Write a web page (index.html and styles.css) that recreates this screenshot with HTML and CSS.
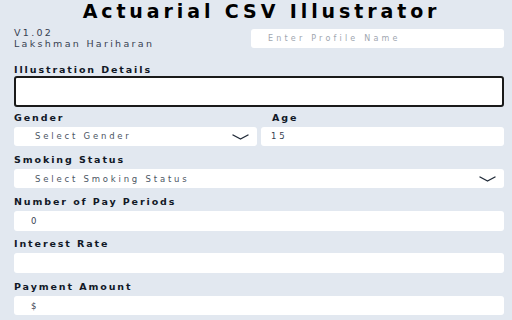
FILE: index.html
```html
<!DOCTYPE html>
<html lang="en">
<head>
<meta charset="utf-8">
<title>Actuarial CSV Illustrator</title>
<link rel="stylesheet" href="styles.css">
</head>
<body>
<div class="page">
  <h1 class="title">Actuarial CSV Illustrator</h1>
  <div class="header">
    <div class="meta">
      <div>V1.02</div>
      <div>Lakshman Hariharan</div>
    </div>
    <input class="control profile" type="text" placeholder="Enter Profile Name">
  </div>

  <div class="field details">
    <label class="label">Illustration Details</label>
    <textarea class="area"></textarea>
  </div>

  <div class="row2">
    <div class="field">
      <label class="label">Gender</label>
      <div class="select">
        <span class="select-text">Select Gender</span>
        <svg class="chev" viewBox="0 0 17 6" width="17" height="6"><path d="M1 1 L8.5 5 L16 1" fill="none" stroke="#1f2937" stroke-width="1.4" stroke-linecap="round" stroke-linejoin="round"/></svg>
      </div>
    </div>
    <div class="field">
      <label class="label label-age">Age</label>
      <input class="control age" type="text" value="15">
    </div>
  </div>

  <div class="field">
    <label class="label">Smoking Status</label>
    <div class="select">
      <span class="select-text">Select Smoking Status</span>
      <svg class="chev" viewBox="0 0 17 6" width="17" height="6"><path d="M1 1 L8.5 5 L16 1" fill="none" stroke="#1f2937" stroke-width="1.4" stroke-linecap="round" stroke-linejoin="round"/></svg>
    </div>
  </div>

  <div class="field">
    <label class="label">Number of Pay Periods</label>
    <input class="control" type="text" value="0">
  </div>

  <div class="field">
    <label class="label">Interest Rate</label>
    <input class="control" type="text" value="">
  </div>

  <div class="field">
    <label class="label">Payment Amount</label>
    <input class="control" type="text" value="$">
  </div>
</div>
</body>
</html>
```
FILE: styles.css
```css
html, body {
  margin: 0;
  padding: 0;
  background: #e2e8f0;
  font-family: "DejaVu Sans", "Liberation Sans", sans-serif;
  overflow: hidden;
}

.page {
  padding: 0 8px 0 14px;
}

.title {
  margin: 0;
  padding-left: 5px;
  font-size: 19px;
  line-height: 22px;
  font-weight: bold;
  letter-spacing: 3.9px;
  text-align: center;
  color: #000;
}

.header {
  display: grid;
  grid-template-columns: 1fr 253px;
  margin-top: 5.4px;
}

.meta {
  font-size: 9.5px;
  line-height: 11px;
  letter-spacing: 2.3px;
  color: #374151;
}

.control {
  display: block;
  box-sizing: border-box;
  width: 100%;
  height: 19.5px;
  margin: 3px 0 0 0;
  border: none;
  border-radius: 3px;
  background: #fff;
  padding: 0 0 0 17px;
  font-family: "DejaVu Sans", sans-serif;
  font-size: 8.5px;
  letter-spacing: 2.9px;
  color: #374151;
  outline: none;
}

.control::placeholder {
  color: #a0a6b0;
}

.profile {
  margin-top: 2px;
  height: 18.4px;
  font-size: 8px;
  letter-spacing: 3.2px;
}

.age {
  padding-left: 10px;
}

.label {
  display: block;
  font-size: 9.5px;
  line-height: 12px;
  font-weight: bold;
  letter-spacing: 1.9px;
  color: #111827;
}

.label-age {
  padding-left: 11px;
}

.field {
  margin-top: 7.8px;
}

.details {
  margin-top: 14.8px;
}

.area {
  display: block;
  box-sizing: border-box;
  width: 100%;
  height: 31.3px;
  margin-top: -0.5px;
  border: 2px solid #1a1a1a;
  border-radius: 3px;
  background: #fff;
  resize: none;
}

.row2 {
  display: grid;
  grid-template-columns: 1fr 1fr;
  gap: 4px;
  margin-top: 4.6px;
}

.row2 > .field {
  margin-top: 0;
}

.select {
  position: relative;
  display: flex;
  align-items: center;
  box-sizing: border-box;
  height: 19.5px;
  margin-top: 3px;
  padding-left: 21px;
  border-radius: 3px;
  background: #fff;
}

.select-text {
  font-size: 8.5px;
  letter-spacing: 2.8px;
  color: #4b5563;
}

.chev {
  position: absolute;
  right: 8.5px;
  top: 7px;
}
```
